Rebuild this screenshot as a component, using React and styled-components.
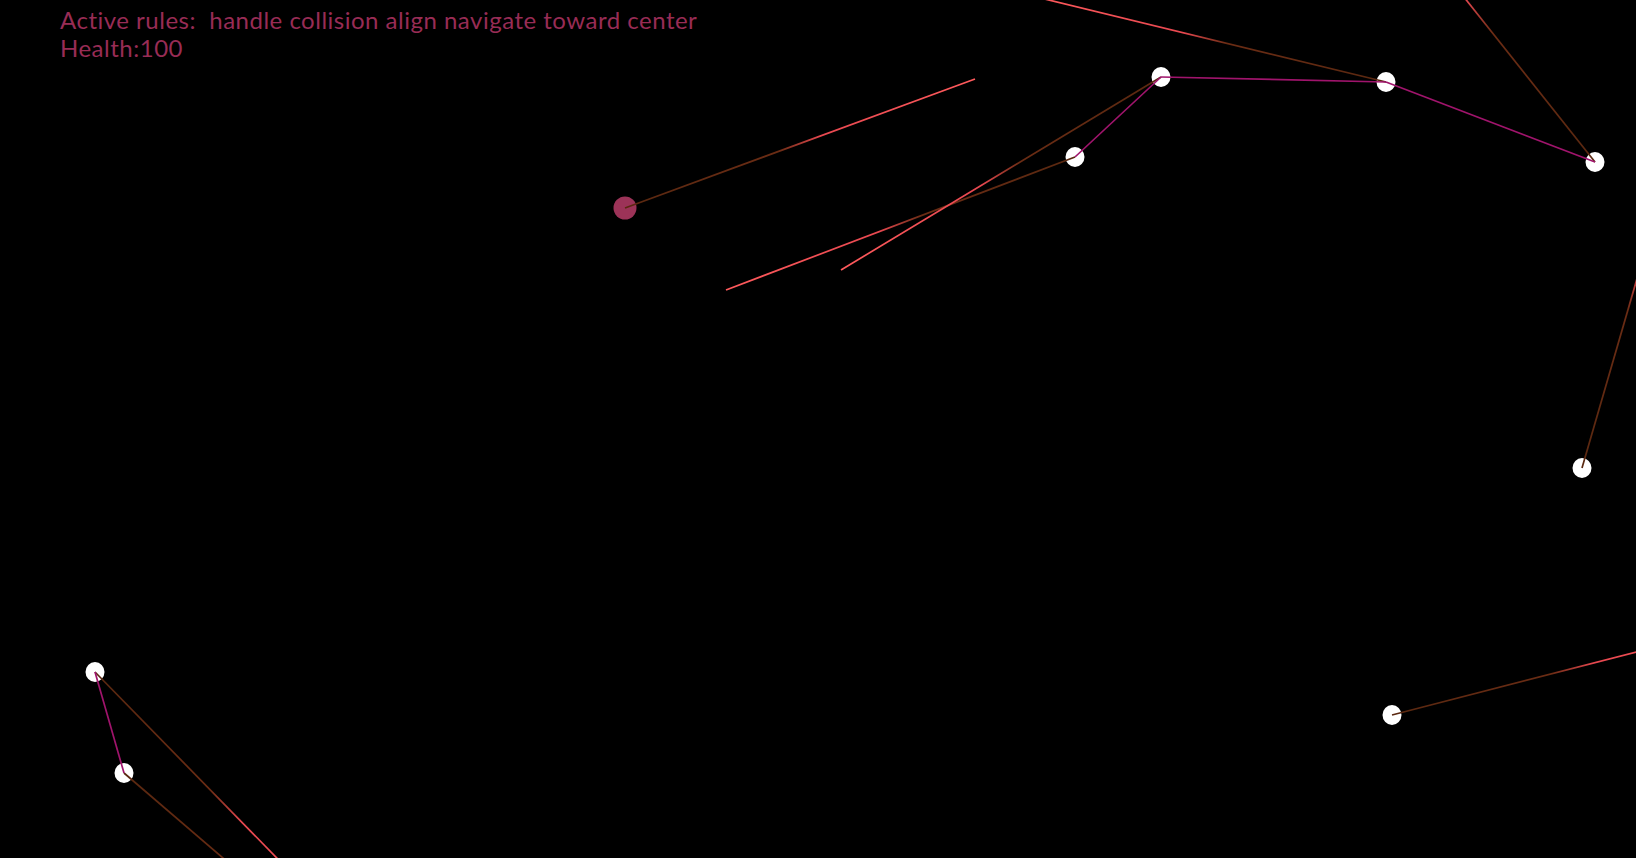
import React from 'react';
import styled, { createGlobalStyle } from 'styled-components';

const GlobalStyle = createGlobalStyle`
  html, body {
    margin: 0;
    padding: 0;
    background: #000;
    overflow: hidden;
  }
`;

const Stage = styled.div`
  position: relative;
  width: 100vw;
  height: 100vh;
  background: #000;
  overflow: hidden;
`;

const Field = styled.svg`
  display: block;
  width: 100%;
  height: 100%;
`;

const Hud = styled.div`
  position: absolute;
  top: 6px;
  left: 60px;
  color: #982c55;
  font-family: Lato, "Open Sans", sans-serif;
  font-size: 24px;
  line-height: 28px;
  letter-spacing: 0.5px;
  white-space: pre;
  pointer-events: none;
`;

const HudLine = styled.div``;

const boids = [
  { id: 'a', x: 1075, y: 157, to: [726, 290] },
  { id: 'b', x: 1161, y: 77, to: [841, 270] },
  { id: 'c', x: 1386, y: 82, to: [1024, -6] },
  { id: 'd', x: 1595, y: 162, to: [1363, -130] },
  { id: 'e', x: 1582, y: 468, to: [1686, 110] },
  { id: 'f', x: 95, y: 672, to: [356, 939] },
  { id: 'g', x: 124, y: 773, to: [407, 1016] },
  { id: 'h', x: 1392, y: 715, to: [1753, 622] },
];

const player = { id: 'p', x: 625, y: 208, to: [975, 79] };

// neighbour links drawn in magenta
const links = [
  ['a', 'b'],
  ['b', 'c'],
  ['c', 'd'],
  ['f', 'g'],
];

const byId = (id) => boids.find((b) => b.id === id);

function Heading({ boid }) {
  const gid = `grad-${boid.id}`;
  return (
    <>
      <defs>
        <linearGradient
          id={gid}
          gradientUnits="userSpaceOnUse"
          x1={boid.x}
          y1={boid.y}
          x2={boid.to[0]}
          y2={boid.to[1]}
        >
          <stop offset="0" stopColor="#5a2810" />
          <stop offset="0.44" stopColor="#6b2c14" />
          <stop offset="0.56" stopColor="#e84850" />
          <stop offset="1" stopColor="#ff5a5c" />
        </linearGradient>
      </defs>
      <line
        x1={boid.x}
        y1={boid.y}
        x2={boid.to[0]}
        y2={boid.to[1]}
        stroke={`url(#${gid})`}
        strokeWidth="1.7"
      />
    </>
  );
}

export default function App() {
  const all = [...boids, player];
  return (
    <>
      <GlobalStyle />
      <Stage>
        <Field viewBox="0 0 1636 858" preserveAspectRatio="none">
          <circle cx={player.x} cy={player.y} r="11.5" fill="#9c3358" />
          {boids.map((b) => (
            <ellipse key={b.id} cx={b.x} cy={b.y} rx="9.5" ry="10" fill="#fff" />
          ))}
          {all.map((b) => (
            <Heading key={b.id} boid={b} />
          ))}
          {links.map(([p, q]) => {
            const s = byId(p);
            const t = byId(q);
            return (
              <line
                key={p + q}
                x1={s.x}
                y1={s.y}
                x2={t.x}
                y2={t.y}
                stroke="#a0146c"
                strokeWidth="1.7"
              />
            );
          })}
        </Field>
        <Hud>
          <HudLine>Active rules:  handle collision align navigate toward center</HudLine>
          <HudLine>Health:100</HudLine>
        </Hud>
      </Stage>
    </>
  );
}
